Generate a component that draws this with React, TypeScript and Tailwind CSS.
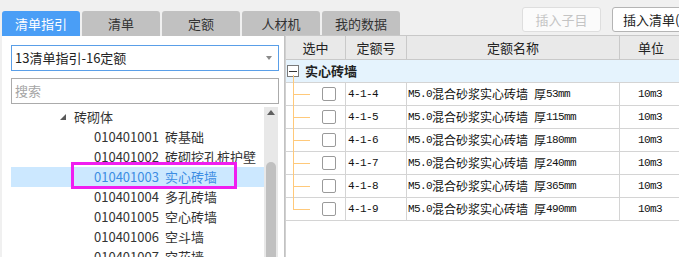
import React from "react";

const UI = "font-['Noto_Sans_CJK_SC','Noto_Sans',sans-serif]";

function Mixed({ text }: { text: string }) {
  const chars = Array.from(text);
  return (
    <span className="inline-flex items-center whitespace-pre leading-none">
      {chars.map((c, i) =>
        /[\x20-\x7e]/.test(c) ? (
          <span
            key={i}
            className="inline-block w-[6px] font-['Liberation_Mono',monospace] text-[11px] text-[#111]"
          >
            {c}
          </span>
        ) : (
          <span
            key={i}
            className="inline-block w-[12px] font-['Noto_Sans_CJK_SC',sans-serif] text-[12px] text-[#111]"
          >
            {c}
          </span>
        )
      )}
    </span>
  );
}

const tabs = ["清单指引", "清单", "定额", "人材机", "我的数据"];

const tree = [
  { code: "010401001", name: "砖基础" },
  { code: "010401002", name: "砖砌挖孔桩护壁" },
  { code: "010401003", name: "实心砖墙", sel: true },
  { code: "010401004", name: "多孔砖墙" },
  { code: "010401005", name: "空心砖墙" },
  { code: "010401006", name: "空斗墙" },
  { code: "010401007", name: "空花墙" },
];

const rows = [
  { code: "4-1-4", name: "M5.0混合砂浆实心砖墙 厚53mm" },
  { code: "4-1-5", name: "M5.0混合砂浆实心砖墙 厚115mm" },
  { code: "4-1-6", name: "M5.0混合砂浆实心砖墙 厚180mm" },
  { code: "4-1-7", name: "M5.0混合砂浆实心砖墙 厚240mm" },
  { code: "4-1-8", name: "M5.0混合砂浆实心砖墙 厚365mm" },
  { code: "4-1-9", name: "M5.0混合砂浆实心砖墙 厚490mm" },
];

export default function App() {
  return (
    <div className={`w-[679px] h-[257px] overflow-hidden bg-[#f0f0f0] flex flex-col text-[#333] ${UI}`}>
      {/* top bar */}
      <div className="h-[36px] flex shrink-0">
        <div className="flex gap-[2px] pl-[2px] mt-[11px] shrink-0">
          {tabs.map((t, i) => (
            <div
              key={t}
              className={`w-[78px] h-[25px] rounded-t-[3px] flex items-center justify-center text-[13px] ${
                i === 0 ? "bg-[#4a9ef6] text-white" : "bg-[#c1c1c1] text-[#333]"
              }`}
            >
              {t}
            </div>
          ))}
        </div>
        <div className="flex gap-[11px] ml-[122px] mt-[7px] shrink-0">
          <div className="w-[79px] h-[25px] rounded-[3px] border border-[#dedede] bg-[#fbfbfb] text-[#c4c4c4] text-[13px] flex items-center justify-center">
            插入子目
          </div>
          <div className="w-[95px] h-[25px] rounded-[3px] border border-[#b4b4b4] bg-white text-[#222] text-[13px] flex items-center pl-[10px] shrink-0 whitespace-nowrap">
            插入清单(I)
          </div>
        </div>
      </div>

      <div className="flex flex-1 min-h-0">
        {/* left panel */}
        <div className="ml-[2px] w-[283px] bg-white border-r border-[#c2c2c2] flex flex-col shrink-0">
          <div className="ml-[9px] mt-[9px] w-[268px] h-[26px] border border-[#5a9fe8] flex items-center pl-[3px] pr-[6px] text-[13px] text-[#222]">
            <span className="flex-1">13清单指引-16定额</span>
            <svg width="6" height="4" viewBox="0 0 6 4">
              <polygon points="0,0 6,0 3,4" fill="#8a8a8a" />
            </svg>
          </div>
          <div className="ml-[9px] mt-[7px] w-[268px] h-[26px] border border-[#ababab] flex items-center pl-[3px] text-[13px] text-[#a5a5a5]">
            搜索
          </div>
          <div className="ml-[9px] mt-[3px] flex flex-1 min-h-0">
            <div className="w-[253px] flex flex-col">
              <div className="h-[20px] flex items-center text-[13px]">
                <svg width="6" height="6" viewBox="0 0 6 6" className="ml-[49px]">
                  <polygon points="6,0 6,6 0,6" fill="#595959" />
                </svg>
                <span className="ml-[8px]">砖砌体</span>
              </div>
              {tree.map((r) => (
                <div
                  key={r.code}
                  className={`relative h-[20px] flex items-center text-[13px] shrink-0 ${
                    r.sel ? "bg-[#cce8ff] text-[#3d8de3]" : ""
                  }`}
                >
                  <span className="ml-[83px] w-[71px]">{r.code}</span>
                  <span>{r.name}</span>
                  {r.sel && (
                    <div className="absolute left-[60px] top-[-5px] w-[166px] h-[27px] border-[3px] border-[#f01ef0]" />
                  )}
                </div>
              ))}
            </div>
            <div className="w-[14px] bg-[#e8e8e8] flex flex-col items-center">
              <svg width="8" height="5" viewBox="0 0 8 5" className="mt-[3px]">
                <polygon points="0,5 8,5 4,0" fill="#606060" />
              </svg>
              <div className="mt-[47px] w-[10px] flex-1 bg-[#c0c0c0] rounded-t-[5px]" />
            </div>
          </div>
        </div>

        {/* grid */}
        <div className="flex-1 bg-white border-l border-[#d0d0d0] border-t border-t-[#c8c8c8] min-w-0 -mt-px">
          <div className="h-[24px] flex bg-[#e9e9e9] border-b border-[#c9c9c9] text-[13px] text-[#222]">
            <div className="w-[60px] shrink-0 border-r border-[#c9c9c9] flex items-center justify-center">选中</div>
            <div className="w-[61px] shrink-0 border-r border-[#c9c9c9] flex items-center justify-center">定额号</div>
            <div className="w-[213px] shrink-0 border-r border-[#c9c9c9] flex items-center justify-center">定额名称</div>
            <div className="w-[62px] shrink-0 flex items-center justify-center">单位</div>
          </div>
          <div className="relative h-[23px] flex items-center bg-[#e5f3fd] border-b border-[#d4d4d4]">
            <div className="ml-[1px] w-[12px] h-[12px] border border-[#7a7a7a] bg-white flex items-center justify-center">
              <div className="w-[8px] h-px bg-[#333]" />
            </div>
            <span className="ml-[6px] text-[13px] font-bold text-[#222]">实心砖墙</span>
            <div className="absolute left-[7px] top-[15px] bottom-[-1px] w-px bg-[#ffc97a]" />
          </div>
          {rows.map((r, i) => (
            <div key={r.code} className="h-[23px] flex border-b border-[#d4d4d4]">
              <div className="relative w-[60px] shrink-0 border-r border-[#d4d4d4]">
                <div
                  className={`absolute left-[7px] top-0 w-px bg-[#ffc97a] ${
                    i === rows.length - 1 ? "h-[11px]" : "bottom-[-1px]"
                  }`}
                />
                <div className="absolute left-[7px] top-[11px] w-[17px] h-px bg-[#ffc97a]" />
                <div className="absolute left-[36px] top-[4px] w-[14px] h-[14px] rounded-[2px] border border-[#9a9a9a] bg-white" />
              </div>
              <div className="w-[61px] shrink-0 border-r border-[#d4d4d4] flex items-center pl-[2px]">
                <Mixed text={r.code} />
              </div>
              <div className="w-[213px] shrink-0 border-r border-[#d4d4d4] flex items-center pl-[1px] whitespace-nowrap">
                <Mixed text={r.name} />
              </div>
              <div className="w-[62px] shrink-0 flex items-center pl-[18px]">
                <Mixed text="10m3" />
              </div>
            </div>
          ))}
        </div>
      </div>
    </div>
  );
}
